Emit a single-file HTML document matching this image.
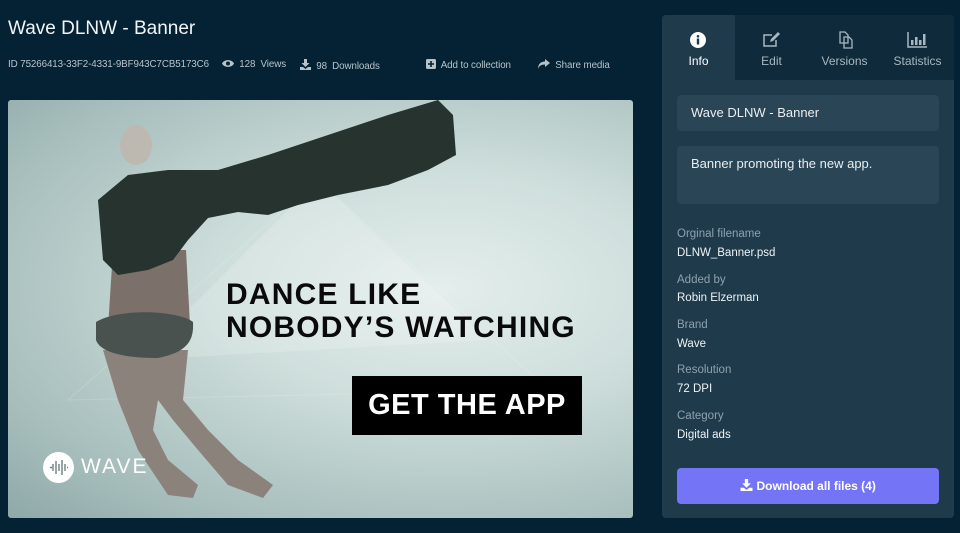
<!DOCTYPE html>
<html><head><meta charset="utf-8"><style>
*{box-sizing:border-box;margin:0;padding:0}
body{width:960px;height:533px;background:#042233;font-family:"Liberation Sans",sans-serif;color:#fff;position:relative;overflow:hidden}
.t{position:absolute}
h1{position:absolute;left:8px;top:18px;font-size:19px;font-weight:normal;color:#f2f5f7}
.meta{position:absolute;top:59px;font-size:9.8px;color:#b7c3cb;white-space:nowrap;letter-spacing:-0.1px}
.img{position:absolute;left:8px;top:100px;width:625px;height:418px;border-radius:3px;overflow:hidden;
background:radial-gradient(ellipse at 70% 45%,#e4eeec 0%,#cfdfdc 35%,#a9c0be 75%,#8fa9a8 100%)}
.panel{position:absolute;left:662px;top:15px;width:292px;height:503px;background:#1f3a4b;border-radius:4px;overflow:hidden}
.tabs{position:absolute;left:0;top:0;width:292px;height:65px;background:#0f2a3a}
.tab{position:absolute;top:0;height:65px;text-align:center;font-size:12px;color:#a8b8c2}
.tab .lbl{position:absolute;left:0;right:0;top:39px}
.box{position:absolute;left:15px;width:262px;background:#2a4555;border-radius:4px;font-size:13px;color:#e8eef1;padding-left:14px}
.lab{position:absolute;left:15px;font-size:11.5px;color:#8ea2ae}
.val{position:absolute;left:15px;font-size:11.5px;color:#eef3f5}
.btn{position:absolute;left:15px;top:453px;width:262px;height:36px;background:#7474f7;border-radius:4px;font-size:12px;font-weight:bold;color:#fff;text-align:center;line-height:36px}
</style></head><body>
<h1>Wave DLNW - Banner</h1>
<div class="meta" style="left:8px">ID 75266413-33F2-4331-9BF943C7CB5173C6</div>
<div class="meta" style="left:222px"><svg width="12" height="9" viewBox="0 0 12 9" style="vertical-align:-1px"><path d="M0 4.5C2 0 10 0 12 4.5C10 9 2 9 0 4.5Z" fill="#b7c3cb"/><circle cx="6" cy="4.5" r="2" fill="#042233"/></svg>&nbsp; 128&nbsp; Views</div>
<div class="meta" style="left:300px"><svg width="11" height="11" viewBox="0 0 11 11" style="vertical-align:-1px"><path d="M4 0h3v4h2.5L5.5 8 1.5 4H4Z M0 8h3l2.5 2 2.5-2h3v3H0Z" fill="#b7c3cb"/></svg>&nbsp; 98&nbsp; Downloads</div>
<div class="meta" style="left:426px"><svg width="10" height="10" viewBox="0 0 10 10" style="vertical-align:-1px"><rect width="10" height="10" rx="1.5" fill="#b7c3cb"/><path d="M5 2v6M2 5h6" stroke="#042233" stroke-width="1.6"/></svg>&nbsp; Add to collection</div>
<div class="meta" style="left:538px"><svg width="12" height="10" viewBox="0 0 12 10" style="vertical-align:-1px"><path d="M7 0l5 4-5 4V5.5C3 5.5 1 7 0 10 0 5 3 2.5 7 2.5Z" fill="#b7c3cb"/></svg>&nbsp; Share media</div>

<div class="img">
<svg width="625" height="418" viewBox="0 0 625 418" style="position:absolute;left:0;top:0">
<polygon points="310,80 480,240 130,260" fill="#ffffff" opacity="0.18"/>
<polygon points="310,80 540,290 60,300" fill="none" stroke="#fff" stroke-opacity="0.15"/>
<polygon points="95,250 180,250 175,300 200,330 230,360 265,385 255,398 220,385 190,350 165,320 150,300 145,330 160,360 190,385 185,398 160,395 130,350 110,300" fill="#8a827b"/>
<polygon points="105,150 178,150 182,225 100,228" fill="#7b716a"/>
<path d="M88 222C110 208 170 210 185 222 186 240 180 252 150 258 115 258 92 252 88 240Z" fill="#4a524f"/>
<polygon points="90,100 120,75 160,70 210,70 260,55 320,35 380,15 430,0 445,15 448,55 420,70 380,85 330,95 290,105 260,115 230,112 200,118 180,140 165,160 140,170 110,175 95,160" fill="#27332f"/>
<ellipse cx="128" cy="45" rx="16" ry="20" fill="#bdb9b0"/>
</svg>
<div class="t" style="left:218px;top:178px;font-size:30px;font-weight:bold;color:#0a0a0a;line-height:33px;letter-spacing:1.2px">DANCE LIKE<br>NOBODY’S WATCHING</div>
<div class="t" style="left:344px;top:276px;width:230px;height:59px;background:#000;color:#fff;font-size:29px;font-weight:bold;text-align:center;line-height:59px;letter-spacing:0.5px">GET THE APP</div>
<div class="t" style="left:35px;top:352px;width:31px;height:31px;border-radius:50%;background:#fff"><svg width="31" height="31" viewBox="0 0 31 31"><path d="M7 15.5h2M10 12v7M13 9v13M16 12v7M19 8v15M22 12v7M24 15.5h1" stroke="#6b7f80" stroke-width="1.4"/></svg></div>
<div class="t" style="left:73px;top:355px;font-size:21px;color:#fff;letter-spacing:2px">WAVE</div>
</div>

<div class="panel">
<div class="tabs">
<div class="tab" style="left:0;width:73px;background:#1f3a4b;color:#fff"><svg width="16" height="16" viewBox="0 0 16 16" style="position:absolute;left:28px;top:17px"><circle cx="8" cy="8" r="8" fill="#fff"/><rect x="6.8" y="6.5" width="2.4" height="6" fill="#1f3a4b"/><circle cx="8" cy="4.3" r="1.3" fill="#1f3a4b"/></svg><div class="lbl">Info</div></div>
<div class="tab" style="left:73px;width:73px"><svg width="18" height="16" viewBox="0 0 18 16" style="position:absolute;left:28px;top:17px"><path d="M13 8v6H1V3h8" fill="none" stroke="#a8b8c2" stroke-width="1.5"/><path d="M7 10l1-3 7-7 2 2-7 7Z" fill="#a8b8c2"/></svg><div class="lbl">Edit</div></div>
<div class="tab" style="left:146px;width:73px"><svg width="18" height="18" viewBox="0 0 18 18" style="position:absolute;left:28px;top:16px"><path d="M4 1h5l3 3v8H4Z M8 6h5l3 3v8H8Z" fill="#0f2a3a" stroke="#a8b8c2" stroke-width="1.3"/></svg><div class="lbl">Versions</div></div>
<div class="tab" style="left:219px;width:73px"><svg width="20" height="16" viewBox="0 0 20 16" style="position:absolute;left:26px;top:17px"><path d="M1 0v15h19" fill="none" stroke="#a8b8c2" stroke-width="1.5"/><rect x="4" y="8" width="2.5" height="5" fill="#a8b8c2"/><rect x="8" y="5" width="2.5" height="8" fill="#a8b8c2"/><rect x="12" y="8" width="2.5" height="5" fill="#a8b8c2"/><rect x="16" y="2" width="2.5" height="11" fill="#a8b8c2"/></svg><div class="lbl">Statistics</div></div>
</div>
<div class="box" style="top:80px;height:36px;line-height:36px">Wave DLNW - Banner</div>
<div class="box" style="top:131px;height:58px;padding-top:10px">Banner promoting the new app.</div>
<div class="lab" style="top:213px">Orginal filename</div><div class="val" style="top:232px">DLNW_Banner.psd</div>
<div class="lab" style="top:259px">Added by</div><div class="val" style="top:277px">Robin Elzerman</div>
<div class="lab" style="top:304px">Brand</div><div class="val" style="top:323px">Wave</div>
<div class="lab" style="top:349px">Resolution</div><div class="val" style="top:368px">72 DPI</div>
<div class="lab" style="top:395px">Category</div><div class="val" style="top:414px">Digital ads</div>
<div class="btn"><svg width="13" height="12" viewBox="0 0 11 11" style="vertical-align:-1px"><path d="M4 0h3v4h2.5L5.5 8 1.5 4H4Z M0 8h3l2.5 2 2.5-2h3v3H0Z" fill="#fff"/></svg> Download all files (4)</div>
</div>
</body></html>
